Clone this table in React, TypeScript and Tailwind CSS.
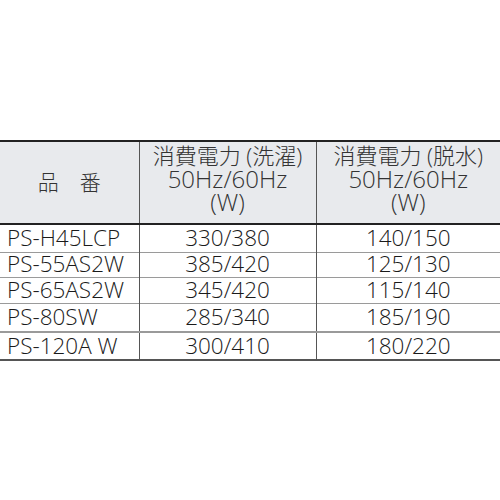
import React from "react";

const rows: { name: string; a: string; b: string; h: string; border: string }[] = [
  { name: "PS-H45LCP", a: "330/380", b: "140/150", h: "h-[28px]", border: "border-b border-[#9a9a9a]" },
  { name: "PS-55AS2W", a: "385/420", b: "125/130", h: "h-[25px]", border: "border-b border-[#9a9a9a]" },
  { name: "PS-65AS2W", a: "345/420", b: "115/140", h: "h-[26px]", border: "border-b border-[#9a9a9a]" },
  { name: "PS-80SW", a: "285/340", b: "185/190", h: "h-[29px]", border: "border-b-2 border-[#9a9a9a]" },
  { name: "PS-120A W", a: "300/410", b: "180/220", h: "h-[28px]", border: "border-b-2 border-[#555]" },
];

export default function App() {
  return (
    <div
      className="w-[500px] h-[500px] bg-white pt-[140px] text-[#1a1a1a] font-light"
      style={{ fontFamily: '"Open Sans", "Noto Sans CJK JP", sans-serif' }}
    >
      <table className="w-[500px] border-collapse table-fixed">
        <colgroup>
          <col className="w-[139px]" />
          <col className="w-[177px]" />
          <col className="w-[184px]" />
        </colgroup>
        <thead>
          <tr className="bg-[#e8eaed] border-t-2 border-b-2 border-[#222] h-[83px] text-[#333]">
            <th className="font-light text-[21px] text-center align-middle border-r border-[#555]">
              品　番
            </th>
            <th className="font-light text-[24px] leading-[23px] pb-[9px] text-center align-middle border-r border-[#555]">
              <div className="text-[22px]">消費電力 (洗濯)</div>
              <div>50Hz/60Hz</div>
              <div>(W)</div>
            </th>
            <th className="font-light text-[24px] leading-[23px] pb-[9px] text-center align-middle">
              <div className="text-[22px]">消費電力 (脱水)</div>
              <div>50Hz/60Hz</div>
              <div>(W)</div>
            </th>
          </tr>
        </thead>
        <tbody>
          {rows.map((r) => (
            <tr key={r.name} className={`${r.h} ${r.border} text-[22.5px] leading-none`}>
              <td className="pl-[7px] border-r border-[#555] whitespace-nowrap">{r.name}</td>
              <td className="text-center border-r border-[#555]">{r.a}</td>
              <td className="text-center">{r.b}</td>
            </tr>
          ))}
        </tbody>
      </table>
    </div>
  );
}
